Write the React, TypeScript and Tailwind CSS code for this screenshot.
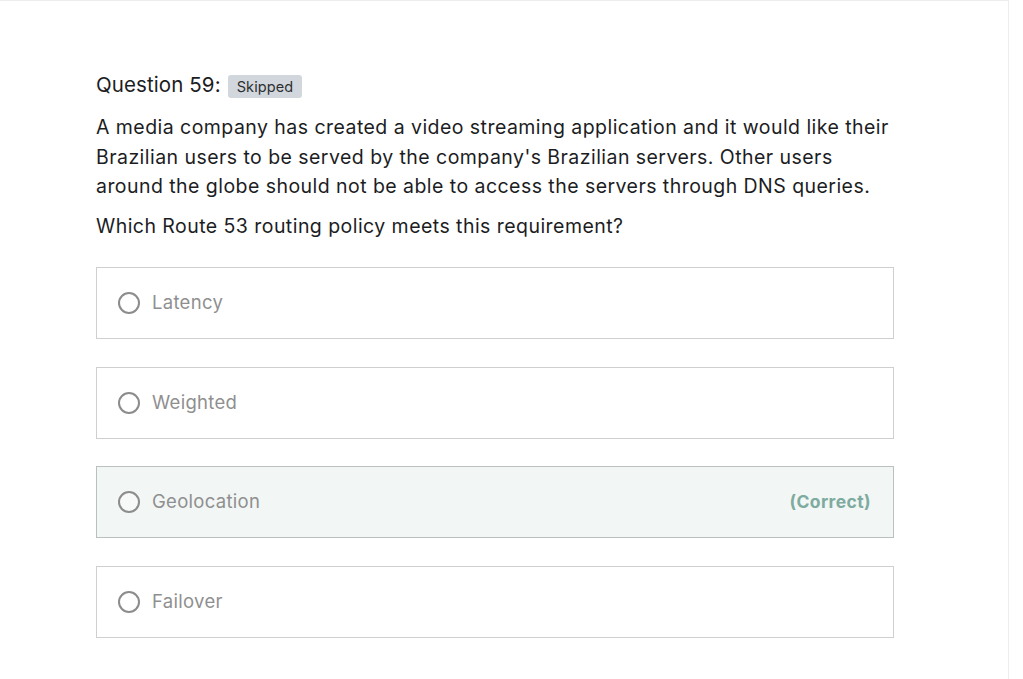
import React from 'react';

interface Option {
  label: string;
  correct?: boolean;
}

const options: Option[] = [
  { label: 'Latency' },
  { label: 'Weighted' },
  { label: 'Geolocation', correct: true },
  { label: 'Failover' },
];

function Radio() {
  return (
    <span className="w-[22px] h-[22px] rounded-full border-[2.5px] border-[#8c8c8c] bg-white/40 shrink-0" />
  );
}

export default function App() {
  return (
    <div
      className="w-[1009px] h-[679px] bg-white border-t border-r border-[#ececec] text-[#1c1d1f]"
      style={{ fontFamily: 'Inter, "Noto Sans", sans-serif' }}
    >
      <div className="pl-[96px] pr-[114px] pt-[70px]">
        <div className="flex items-center gap-[7px]">
          <h2 className="text-[20.5px] leading-[28px] font-normal tracking-[0.1px]">Question 59:</h2>
          <span className="mt-[3px] bg-[#d1d7dc] text-[#2d2f31] text-[14.5px] leading-[23px] px-[9px] rounded-[3px] tracking-[0.1px]">
            Skipped
          </span>
        </div>

        <p className="mt-[14px] text-[19.5px] leading-[29.5px] tracking-[0.45px]">
          A media company has created a video streaming application and it would like their Brazilian users to be served by the company's Brazilian servers. Other users around the globe should not be able to access the servers through DNS queries.
        </p>
        <p className="mt-[10px] text-[19.5px] leading-[29.5px] tracking-[0.45px]">
          Which Route 53 routing policy meets this requirement?
        </p>

        <div className="mt-[26px] flex flex-col gap-[27.5px]">
          {options.map((opt) => (
            <div
              key={opt.label}
              className={`h-[72px] flex items-center pl-[21px] pr-[22px] border-[1.5px] ${
                opt.correct ? 'bg-[#f2f6f5] border-[#b9c0bf]' : 'bg-white border-[#cfcfcf]'
              }`}
            >
              <Radio />
              <span className="ml-[12px] text-[18.5px] tracking-[0.3px] text-[#8f8f8f]">{opt.label}</span>
              {opt.correct && (
                <span className="ml-auto text-[17.5px] tracking-[0.4px] font-bold text-[#7eab9f]">(Correct)</span>
              )}
            </div>
          ))}
        </div>
      </div>
    </div>
  );
}
